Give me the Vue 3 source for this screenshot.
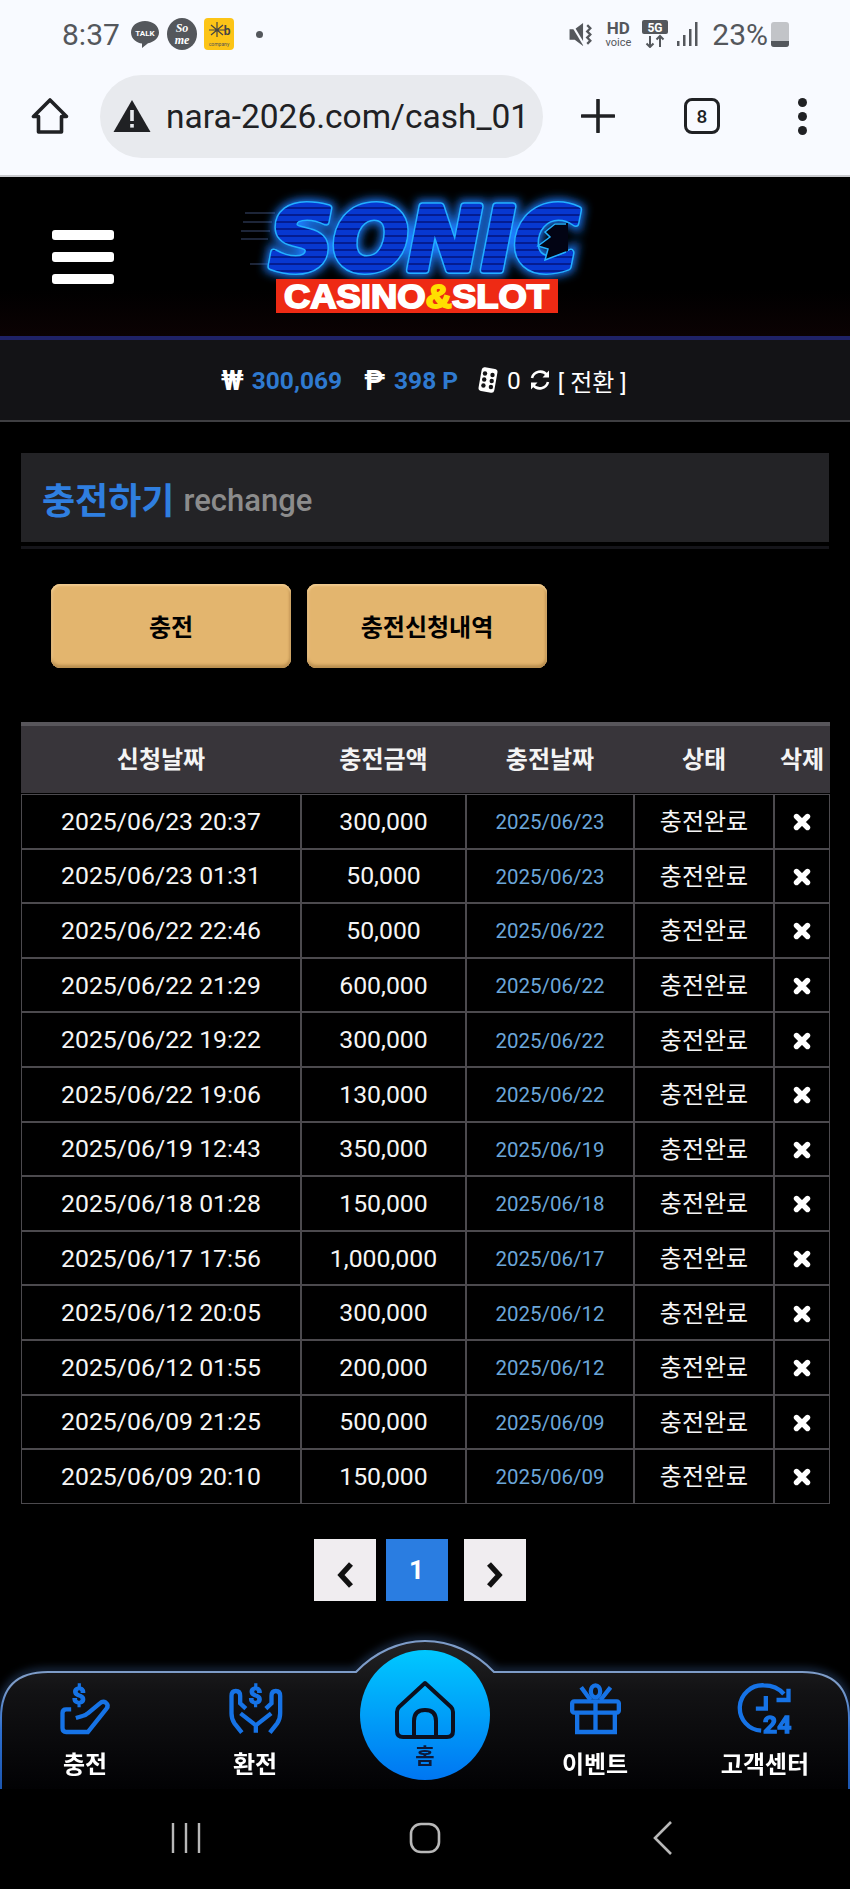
<template>
  <div class="page">
    <!-- 폰 상태바 -->
    <div class="status-bar">
      <div class="status-left">
        <span class="clock">8:37</span>
        <svg class="noti" width="30" height="30" viewBox="0 0 30 30">
          <path d="M15 2C7 2 1 7 1 13.500C1 20 7 24 12 24.500L12 29L18 24.300C24 23 29 19 29 13.500C29 7 23 2 15 2Z" fill="#54575c" />
          <text x="15" y="17" text-anchor="middle" class="noti-talk">TALK</text>
        </svg>
        <svg class="noti" width="30" height="32" viewBox="0 0 30 32">
          <ellipse cx="15" cy="16" rx="15" ry="16" fill="#54575c" />
          <text x="15" y="14" text-anchor="middle" class="noti-some">So</text>
          <text x="15" y="26" text-anchor="middle" class="noti-some">me</text>
        </svg>
        <svg class="noti" width="30" height="32" viewBox="0 0 30 32">
          <rect width="30" height="32" rx="4" fill="#fcc417" />
          <path d="M13 4V19M7 7L19 17M19 7L7 17M5 12H21" stroke="#444" stroke-width="1.200" fill="none" />
          <text x="23" y="17" text-anchor="middle" class="noti-kb">b</text>
          <text x="15" y="28" text-anchor="middle" class="noti-tiny">company</text>
        </svg>
        <i class="dot"></i>
      </div>
      <div class="status-right">
        <svg width="27" height="27" viewBox="0 0 25 26" fill="none">
          <path d="M1 8H6L14 2V24L6 18H1Z" fill="#54575c" />
          <path d="M3 3L15 23" stroke="#f8faff" stroke-width="2" />
          <path d="M18 4L21 7L18 10L21 13L18 16L21 19L18 22" stroke="#54575c" stroke-width="2.200" />
        </svg>
        <div class="hd"><b>HD</b><span>voice</span></div>
        <svg width="26" height="28" viewBox="0 0 26 28" fill="none">
          <rect width="26" height="14" rx="2" fill="#54575c" />
          <text x="13" y="11.500" text-anchor="middle" class="five-g">5G</text>
          <path d="M8 16V27M4.500 23.500L8 27L11.500 23.500M18 27V16M14.500 19.500L18 16L21.500 19.500" stroke="#54575c" stroke-width="2" />
        </svg>
        <svg class="signal" width="22" height="26" viewBox="0 0 22 26" fill="#54575c">
          <rect x="0" y="20" width="2.500" height="5" />
          <rect x="6" y="14" width="2.500" height="11" />
          <rect x="12" y="8" width="2.500" height="17" />
          <rect x="18" y="1" width="2.500" height="24" />
        </svg>
        <span class="battery-text">23%</span>
        <div class="battery"><i></i></div>
      </div>
    </div>

    <!-- 브라우저 툴바 -->
    <div class="toolbar">
      <svg class="tool-home" width="38" height="38" viewBox="0 0 38 38" fill="none">
        <path d="M19 3L2.500 19.500H7.500V35H30.500V19.500H35.500Z" stroke="#202124" stroke-width="3.600" stroke-linejoin="round" />
      </svg>
      <div class="url-pill">
        <svg width="38" height="34" viewBox="0 0 38 34">
          <path d="M19 1L37.500 33H.5Z" fill="#202124" />
          <rect x="17.200" y="11" width="3.600" height="11" fill="#e8eaee" />
          <rect x="17.200" y="25" width="3.600" height="3.600" fill="#e8eaee" />
        </svg>
        <div class="url-text">nara-2026.com/cash_01.php</div>
      </div>
      <svg class="tool-plus" width="34" height="34" viewBox="0 0 34 34">
        <path d="M17 1V33M1 17H33" stroke="#202124" stroke-width="3.600" stroke-linecap="round" />
      </svg>
      <div class="tabs">8</div>
      <div class="dots"><i></i><i></i><i></i></div>
    </div>

    <!-- 사이트 헤더 -->
    <header class="site-header">
      <div class="burger"><i></i><i></i><i></i></div>
      <svg class="logo" width="360" height="125" viewBox="240 195 360 125">
        <defs>
          <pattern id="scan" width="8" height="7" patternUnits="userSpaceOnUse">
            <rect width="8" height="7" fill="#0738d0" />
            <rect y="3" width="8" height="2" fill="#041c90" />
          </pattern>
          <filter id="glow" x="-20%" y="-30%" width="140%" height="160%">
            <feGaussianBlur stdDeviation="5" />
          </filter>
        </defs>
        <path d="M245 212H275M243 221H272M241 230H270M241 238H268M250 263H268" stroke="#3b4a70" stroke-width="1.200" />
        <use href="#sonicWord" class="sonic-glow" filter="url(#glow)" />
        <use href="#sonicWord" class="sonic-edge" />
        <g class="sonic-main" fill="url(#scan)" stroke="url(#scan)">
          <text id="sonicWord" x="270" y="269" textLength="309" lengthAdjust="spacingAndGlyphs" class="sonic">SONIC</text>
        </g>
        <!-- C 안쪽 가시 -->
        <path d="M574 222H555L545 231L550 236L538 245L548 248L545 259L568 250V222Z" fill="#020414" />
        <path d="M566 223H555L545 231L550 236L538 245L548 248L545 259L566 251" fill="none" stroke="#22b0ff" stroke-width="1.500" />
        <rect x="276" y="278" width="282" height="34" fill="#ee2a14" />
        <text x="284" y="307" textLength="265" lengthAdjust="spacingAndGlyphs" class="casino">CASINO<tspan fill="#ffdf00" stroke="#ffdf00">&amp;</tspan>SLOT</text>
      </svg>
    </header>

    <!-- 보유금 -->
    <div class="money-bar">
      <span class="cur">₩</span>
      <b class="amount">300,069</b>
      <span class="cur cur-p">₱</span>
      <b class="amount">398 P</b>
      <svg class="dice" width="24" height="28" viewBox="0 0 24 28">
        <rect x="4" y="2" width="16" height="24" rx="3" transform="rotate(10 12 14)" fill="#fff" />
        <g fill="#131316">
          <circle cx="9" cy="7.500" r="2.200" /><circle cx="16.500" cy="9" r="2.200" />
          <circle cx="8.200" cy="13.500" r="2.200" /><circle cx="15.700" cy="15" r="2.200" />
          <circle cx="7.400" cy="19.500" r="2.200" /><circle cx="14.900" cy="21" r="2.200" />
        </g>
      </svg>
      <span class="zero">0</span>
      <svg class="refresh" width="22" height="22" viewBox="0 0 22 22" fill="none">
        <path d="M3 9A8.500 8.500 0 0 1 18 6M19 13A8.500 8.500 0 0 1 4 16" stroke="#fff" stroke-width="2.600" />
        <path d="M20 1.500V8.500H13.500ZM2 20.500V13.500H8.500Z" fill="#fff" />
      </svg>
      <span class="swap">[ 전환 ]</span>
    </div>

    <main class="content">
      <div class="title-wrap">
        <div class="title-box">
          <h2>충전하기</h2>
          <span>rechange</span>
        </div>
      </div>

      <div class="btn-row">
        <a class="gold-btn">충전</a>
        <a class="gold-btn">충전신청내역</a>
      </div>

      <table class="history">
        <colgroup>
          <col class="c1" /><col class="c2" /><col class="c3" /><col class="c4" /><col />
        </colgroup>
        <thead>
          <tr>
            <th>신청날짜</th>
            <th>충전금액</th>
            <th>충전날짜</th>
            <th>상태</th>
            <th>삭제</th>
          </tr>
        </thead>
        <tbody>
          <tr v-for="row in rows" :key="row.at">
            <td>{{ row.at }}</td>
            <td>{{ row.amount }}</td>
            <td class="done-date">{{ row.at.slice(0, 10) }}</td>
            <td class="state">충전완료</td>
            <td>
              <svg class="del" width="18" height="18" viewBox="0 0 18 18">
                <path d="M3.500 3.500L14.500 14.500M14.500 3.500L3.500 14.500" stroke="#fff" stroke-width="5.400" stroke-linecap="round" />
              </svg>
            </td>
          </tr>
        </tbody>
      </table>

      <div class="pager">
        <a class="pg">
          <svg width="18" height="26" viewBox="0 0 18 26" fill="none"><path d="M15 2L5 13L15 24" stroke="#111" stroke-width="5.400" /></svg>
        </a>
        <a class="pg pg-on">1</a>
        <a class="pg pg-next">
          <svg width="18" height="26" viewBox="0 0 18 26" fill="none"><path d="M3 2L13 13L3 24" stroke="#111" stroke-width="5.400" /></svg>
        </a>
      </div>
    </main>

    <!-- 하단 메뉴 -->
    <nav class="bottom-nav">
      <svg class="nav-bg" width="850" height="149" viewBox="0 0 850 149">
        <defs>
          <linearGradient id="navFill" x1="0" y1="0" x2="0" y2="1">
            <stop offset="0" stop-color="#232325" />
            <stop offset="0.35" stop-color="#121214" />
            <stop offset="1" stop-color="#020204" />
          </linearGradient>
          <linearGradient id="navLine" x1="0" y1="0" x2="0" y2="1">
            <stop offset="0.3" stop-color="#7d9cc8" />
            <stop offset="0.6" stop-color="#2d6fd0" />
            <stop offset="1" stop-color="#1c56b0" />
          </linearGradient>
          <filter id="navGlow" x="-5%" y="-30%" width="110%" height="160%">
            <feGaussianBlur stdDeviation="5" />
          </filter>
        </defs>
        <path d="M1 149V78Q1 32 48 32H356C375 12 400 1 425 1C450 1 475 12 494 32H802Q849 32 849 78V149" fill="none" stroke="#4d7fc8" stroke-width="5" opacity="0.55" filter="url(#navGlow)" />
        <path d="M1 149V78Q1 32 48 32H356C375 12 400 1 425 1C450 1 475 12 494 32H802Q849 32 849 78V149" fill="url(#navFill)" stroke="url(#navLine)" stroke-width="2" />
      </svg>

      <a class="nav-item">
        <svg class="nav-ico" width="57" height="55" viewBox="170 95 170 165" fill="none">
          <text x="235" y="165" text-anchor="middle" class="ico-money">$</text>
          <path d="M212 180H197Q186 180 186 191V236Q186 248 197 248H262L318 178Q326 168 316 160Q307 154 298 162L262 192Q256 198 246 200L226 206" />
        </svg>
        <span>충전</span>
      </a>
      <a class="nav-item">
        <svg class="nav-ico" width="57" height="55" viewBox="682 95 170 165" fill="none">
          <text x="767" y="163" text-anchor="middle" class="ico-money">$</text>
          <path d="M726 250L704 222Q695 210 695 192V140Q695 125 708 125Q721 125 721 140V162L738 178" />
          <path d="M810 250L832 222Q841 210 841 192V140Q841 125 828 125Q815 125 815 140V162L798 178" />
          <path d="M722 192L768 228L814 192M768 228V250" />
        </svg>
        <span>환전</span>
      </a>
      <a class="nav-home">
        <svg width="62" height="60" viewBox="0 0 62 60" fill="none">
          <path d="M31 3L5 27Q3 29 3 32V51Q3 57 9 57H53Q59 57 59 51V32Q59 29 57 27Z" stroke="#0c0f1e" stroke-width="4" stroke-linejoin="round" />
          <path d="M20 57V41Q20 30 31 30Q42 30 42 41V57" stroke="#0c0f1e" stroke-width="4" />
        </svg>
        <span>홈</span>
      </a>
      <a class="nav-item">
        <svg class="nav-ico" width="57" height="55" viewBox="440 95 170 165" fill="none">
          <rect x="455" y="156" width="140" height="34" rx="6" />
          <path d="M470 190V248H583V190M525 156V248" />
          <ellipse cx="525" cy="126" rx="14" ry="18" />
          <path d="M482 114L510 152M570 114L540 152" />
        </svg>
        <span>이벤트</span>
      </a>
      <a class="nav-item">
        <svg class="nav-ico" width="57" height="55" viewBox="950 95 170 165" fill="none">
          <path d="M1022 244A68 68 0 0 1 1030 108Q1068 108 1090 134" />
          <path d="M1104 118V152H1068M1036 140V178H1006" />
          <text x="1070" y="250" text-anchor="middle" class="ico-24">24</text>
        </svg>
        <span>고객센터</span>
      </a>
    </nav>

    <!-- 안드로이드 하단바 -->
    <div class="android-bar">
      <div class="soft"><svg width="30" height="32" viewBox="0 0 30 32"><path d="M2 1V31M15 1V31M28 1V31" stroke="#b8b8b8" stroke-width="2.400" /></svg></div>
      <div class="soft"><svg width="32" height="32" viewBox="0 0 32 32"><rect x="2" y="2" width="28" height="28" rx="10" fill="none" stroke="#b8b8b8" stroke-width="2.600" /></svg></div>
      <div class="soft"><svg width="22" height="34" viewBox="0 0 22 34"><path d="M19 1L3 17L19 33" fill="none" stroke="#b8b8b8" stroke-width="2.600" /></svg></div>
    </div>
  </div>
</template>

<script setup>
const rows = [
  { at: '2025/06/23 20:37', amount: '300,000' },
  { at: '2025/06/23 01:31', amount: '50,000' },
  { at: '2025/06/22 22:46', amount: '50,000' },
  { at: '2025/06/22 21:29', amount: '600,000' },
  { at: '2025/06/22 19:22', amount: '300,000' },
  { at: '2025/06/22 19:06', amount: '130,000' },
  { at: '2025/06/19 12:43', amount: '350,000' },
  { at: '2025/06/18 01:28', amount: '150,000' },
  { at: '2025/06/17 17:56', amount: '1,000,000' },
  { at: '2025/06/12 20:05', amount: '300,000' },
  { at: '2025/06/12 01:55', amount: '200,000' },
  { at: '2025/06/09 21:25', amount: '500,000' },
  { at: '2025/06/09 20:10', amount: '150,000' }
]
</script>

<style>
body {
  background: #000;
}
</style>

<style scoped>
.page {
  width: 850px;
  height: 1889px;
  overflow: hidden;
  background: #000;
  color: #fff;
  font-family: Roboto, "Noto Sans CJK KR", sans-serif;
}

/* 상태바 */
.status-bar {
  height: 72px;
  padding: 0 61px 4px 62px;
  box-sizing: border-box;
  background: #f8faff;
  display: flex;
  align-items: center;
  justify-content: space-between;
  color: #54575c;
}
.status-left,
.status-right {
  display: flex;
  align-items: center;
}
.clock {
  font-size: 30px;
  margin-right: 10px;
}
.noti {
  margin-right: 7px;
}
.noti-talk {
  font: 700 8px Roboto, sans-serif;
  fill: #fff;
}
.noti-some {
  font: italic 700 12px "Liberation Serif", serif;
  fill: #fff;
}
.noti-kb {
  font: 700 12px Roboto, sans-serif;
  fill: #444;
}
.noti-tiny {
  font: 5px Roboto, sans-serif;
  fill: #555;
}
.dot {
  width: 7px;
  height: 7px;
  border-radius: 50%;
  background: #54575c;
  margin-left: 15px;
}
.status-right {
  gap: 11px;
}
.signal {
  margin-left: -2px;
}
.hd {
  display: flex;
  flex-direction: column;
  align-items: center;
  line-height: 1;
}
.hd b {
  font-size: 17px;
}
.hd span {
  font-size: 11px;
}
.five-g {
  font: 700 12px Roboto, sans-serif;
  fill: #fff;
}
.battery-text {
  font-size: 30px;
  margin-left: 2px;
  margin-right: -8px;
}
.battery {
  width: 18px;
  height: 25px;
  border-radius: 3px;
  background: #c2c4c8;
  position: relative;
  overflow: hidden;
}
.battery i {
  position: absolute;
  left: 0;
  right: 0;
  bottom: 0;
  height: 6px;
  background: #54575c;
}

/* 툴바 */
.toolbar {
  height: 88px;
  padding-bottom: 15px;
  background: #f8faff;
  border-bottom: 2px solid #c9cace;
  display: flex;
  align-items: center;
}
.tool-home {
  margin-left: 31px;
}
.url-pill {
  width: 443px;
  height: 83px;
  margin-left: 31px;
  border-radius: 42px;
  background: #e8eaee;
  display: flex;
  align-items: center;
  padding-left: 13px;
  box-sizing: border-box;
}
.url-text {
  width: 361px;
  margin-left: 15px;
  overflow: hidden;
  white-space: nowrap;
  font-size: 33.500px;
  color: #202124;
}
.tool-plus {
  margin-left: 38px;
}
.tabs {
  width: 36px;
  height: 36px;
  margin-left: 69px;
  box-sizing: border-box;
  border: 3.500px solid #202124;
  border-radius: 8px;
  color: #202124;
  font-size: 19px;
  font-weight: 500;
  display: flex;
  align-items: center;
  justify-content: center;
}
.dots {
  margin-left: 78px;
  display: flex;
  flex-direction: column;
  gap: 5px;
}
.dots i {
  width: 9px;
  height: 9px;
  border-radius: 50%;
  background: #202124;
}

/* 헤더 */
.site-header {
  height: 159px;
  background: linear-gradient(#000 70%, #0b0203);
  border-bottom: 4px solid #1f2266;
  display: flex;
  align-items: center;
  padding-left: 52px;
}
.burger {
  width: 62px;
  display: flex;
  flex-direction: column;
  gap: 12px;
}
.burger i {
  height: 10px;
  border-radius: 3px;
  background: #fff;
}
.logo {
  margin-left: 126px;
  margin-top: 3px;
  overflow: visible;
}
.sonic {
  font: italic 700 88px "DejaVu Sans", sans-serif;
}
.sonic-glow {
  fill: #0a50ff;
  stroke: #1a7dff;
  stroke-width: 12px;
}
.sonic-edge {
  fill: #22b0ff;
  stroke: #22b0ff;
  stroke-width: 8px;
  stroke-linejoin: round;
}
.sonic-main {
  stroke-width: 5px;
  stroke-linejoin: round;
}
.casino {
  font: 700 33px "Liberation Sans", sans-serif;
  fill: #fff;
  stroke: #fff;
  stroke-width: 1.800px;
}

/* 보유금 */
.money-bar {
  height: 80px;
  background: #131316;
  border-bottom: 2px solid #3f3f42;
  display: flex;
  align-items: center;
  padding-left: 221px;
  font-size: 24.500px;
}
.cur {
  font-weight: 700;
  font-size: 28px;
  margin-right: 8px;
}
.cur-p {
  margin-left: 22px;
  margin-right: 9px;
}
.amount {
  color: #2f7ad0;
}
.dice {
  margin-left: 18px;
}
.zero {
  margin-left: 7px;
}
.refresh {
  margin-left: 8px;
}
.swap {
  margin-left: 7px;
  font-size: 24px;
  white-space: nowrap;
}

/* 본문 */
.content {
  padding: 31px 21px 0;
}
.title-wrap {
  padding-bottom: 4px;
  border-bottom: 3px solid #15151a;
}
.title-box {
  height: 89px;
  background: #232326;
  display: flex;
  align-items: center;
  padding-left: 21px;
}
.title-box h2 {
  margin: 0;
  font-size: 36px;
  font-weight: 700;
  color: #2f7fe0;
}
.title-box span {
  margin-left: 9px;
  margin-top: 5px;
  font-size: 31px;
  font-weight: 500;
  color: #8c8c8c;
}
.btn-row {
  display: flex;
  gap: 16px;
  padding: 35px 0 0 30px;
}
.gold-btn {
  width: 240px;
  height: 84px;
  padding-bottom: 2px;
  box-sizing: border-box;
  border-radius: 9px;
  background: #e3b56e;
  box-shadow: inset 0 2px 2px #f0cb8f, inset 0 -3px 3px #b98e4f, inset 2px 0 2px #eec68a, inset -2px 0 2px #c99c5a;
  color: #000;
  font-size: 24px;
  font-weight: 700;
  display: flex;
  align-items: center;
  justify-content: center;
}

/* 내역 테이블 */
.history {
  width: 809px;
  margin-top: 54px;
  border-collapse: separate;
  border-spacing: 0;
  table-layout: fixed;
}
.c1 { width: 280px; }
.c2 { width: 165px; }
.c3 { width: 168px; }
.c4 { width: 140px; }
.history th {
  height: 72px;
  box-sizing: border-box;
  padding: 0 0 5px;
  background: #38353a;
  border-top: 4px solid #58565b;
  border-bottom: 1px solid #000;
  font-size: 24px;
  font-weight: 700;
  color: #f4f4f4;
  white-space: nowrap;
}
.history td {
  height: 54.600px;
  box-sizing: border-box;
  padding: 0;
  border: 1px solid #4c4a4e;
  text-align: center;
  font-size: 24.800px;
  color: #f5f5f5;
}
.history td.done-date {
  font-size: 20.500px;
  color: #6ba6d9;
  padding-top: 2px;
}
.history td.state {
  font-size: 24px;
  padding-bottom: 3px;
}
.del {
  display: block;
  margin: 2px auto 0;
}

/* 페이징 */
.pager {
  display: flex;
  justify-content: center;
  margin-top: 35px;
  padding-right: 11px;
}
.pg {
  width: 62px;
  height: 62px;
  background: #f0edf0;
  display: flex;
  align-items: center;
  justify-content: center;
}
.pg svg {
  margin-top: 10px;
}
.pg-on {
  margin-left: 10px;
  background: #2a7de1;
  color: #fff;
  font-size: 26px;
  font-weight: 700;
}
.pg-next {
  margin-left: 16px;
}

/* 하단 메뉴 */
.bottom-nav {
  position: fixed;
  left: 0;
  top: 1640px;
  width: 850px;
  height: 149px;
  display: grid;
  grid-template-columns: repeat(5, 170px);
}
.nav-bg {
  position: absolute;
  inset: 0;
  overflow: visible;
}
.nav-item {
  position: relative;
  padding-top: 41px;
  display: flex;
  flex-direction: column;
  align-items: center;
  font-size: 24px;
  font-weight: 700;
}
.nav-item span {
  margin-top: 13px;
  line-height: 32px;
  white-space: nowrap;
}
.nav-ico {
  overflow: visible;
  stroke: #1673e6;
  stroke-width: 13px;
}
.ico-money {
  font: 700 72px Roboto, sans-serif;
  fill: #1673e6;
  stroke: #1673e6;
  stroke-width: 4px;
}
.ico-24 {
  font: 700 74px Roboto, sans-serif;
  fill: #1673e6;
  stroke: #1673e6;
  stroke-width: 4px;
}
.nav-home {
  position: relative;
  width: 130px;
  height: 130px;
  margin: 10px auto 0;
  border-radius: 50%;
  background: linear-gradient(#00c8ff, #0076f2);
  display: flex;
  flex-direction: column;
  align-items: center;
  padding-top: 30px;
  box-sizing: border-box;
  color: #0c1a3a;
  font-size: 21px;
  font-weight: 700;
}
.nav-home span {
  margin-top: 3px;
  line-height: 26px;
}

/* 안드로이드 바 */
.android-bar {
  position: fixed;
  left: 0;
  top: 1789px;
  width: 850px;
  height: 100px;
  background: #000;
  display: flex;
  justify-content: center;
  align-items: center;
  padding-right: 1px;
  box-sizing: border-box;
}
.soft {
  width: 238.500px;
  display: flex;
  justify-content: center;
  margin-top: -2px;
}
</style>
